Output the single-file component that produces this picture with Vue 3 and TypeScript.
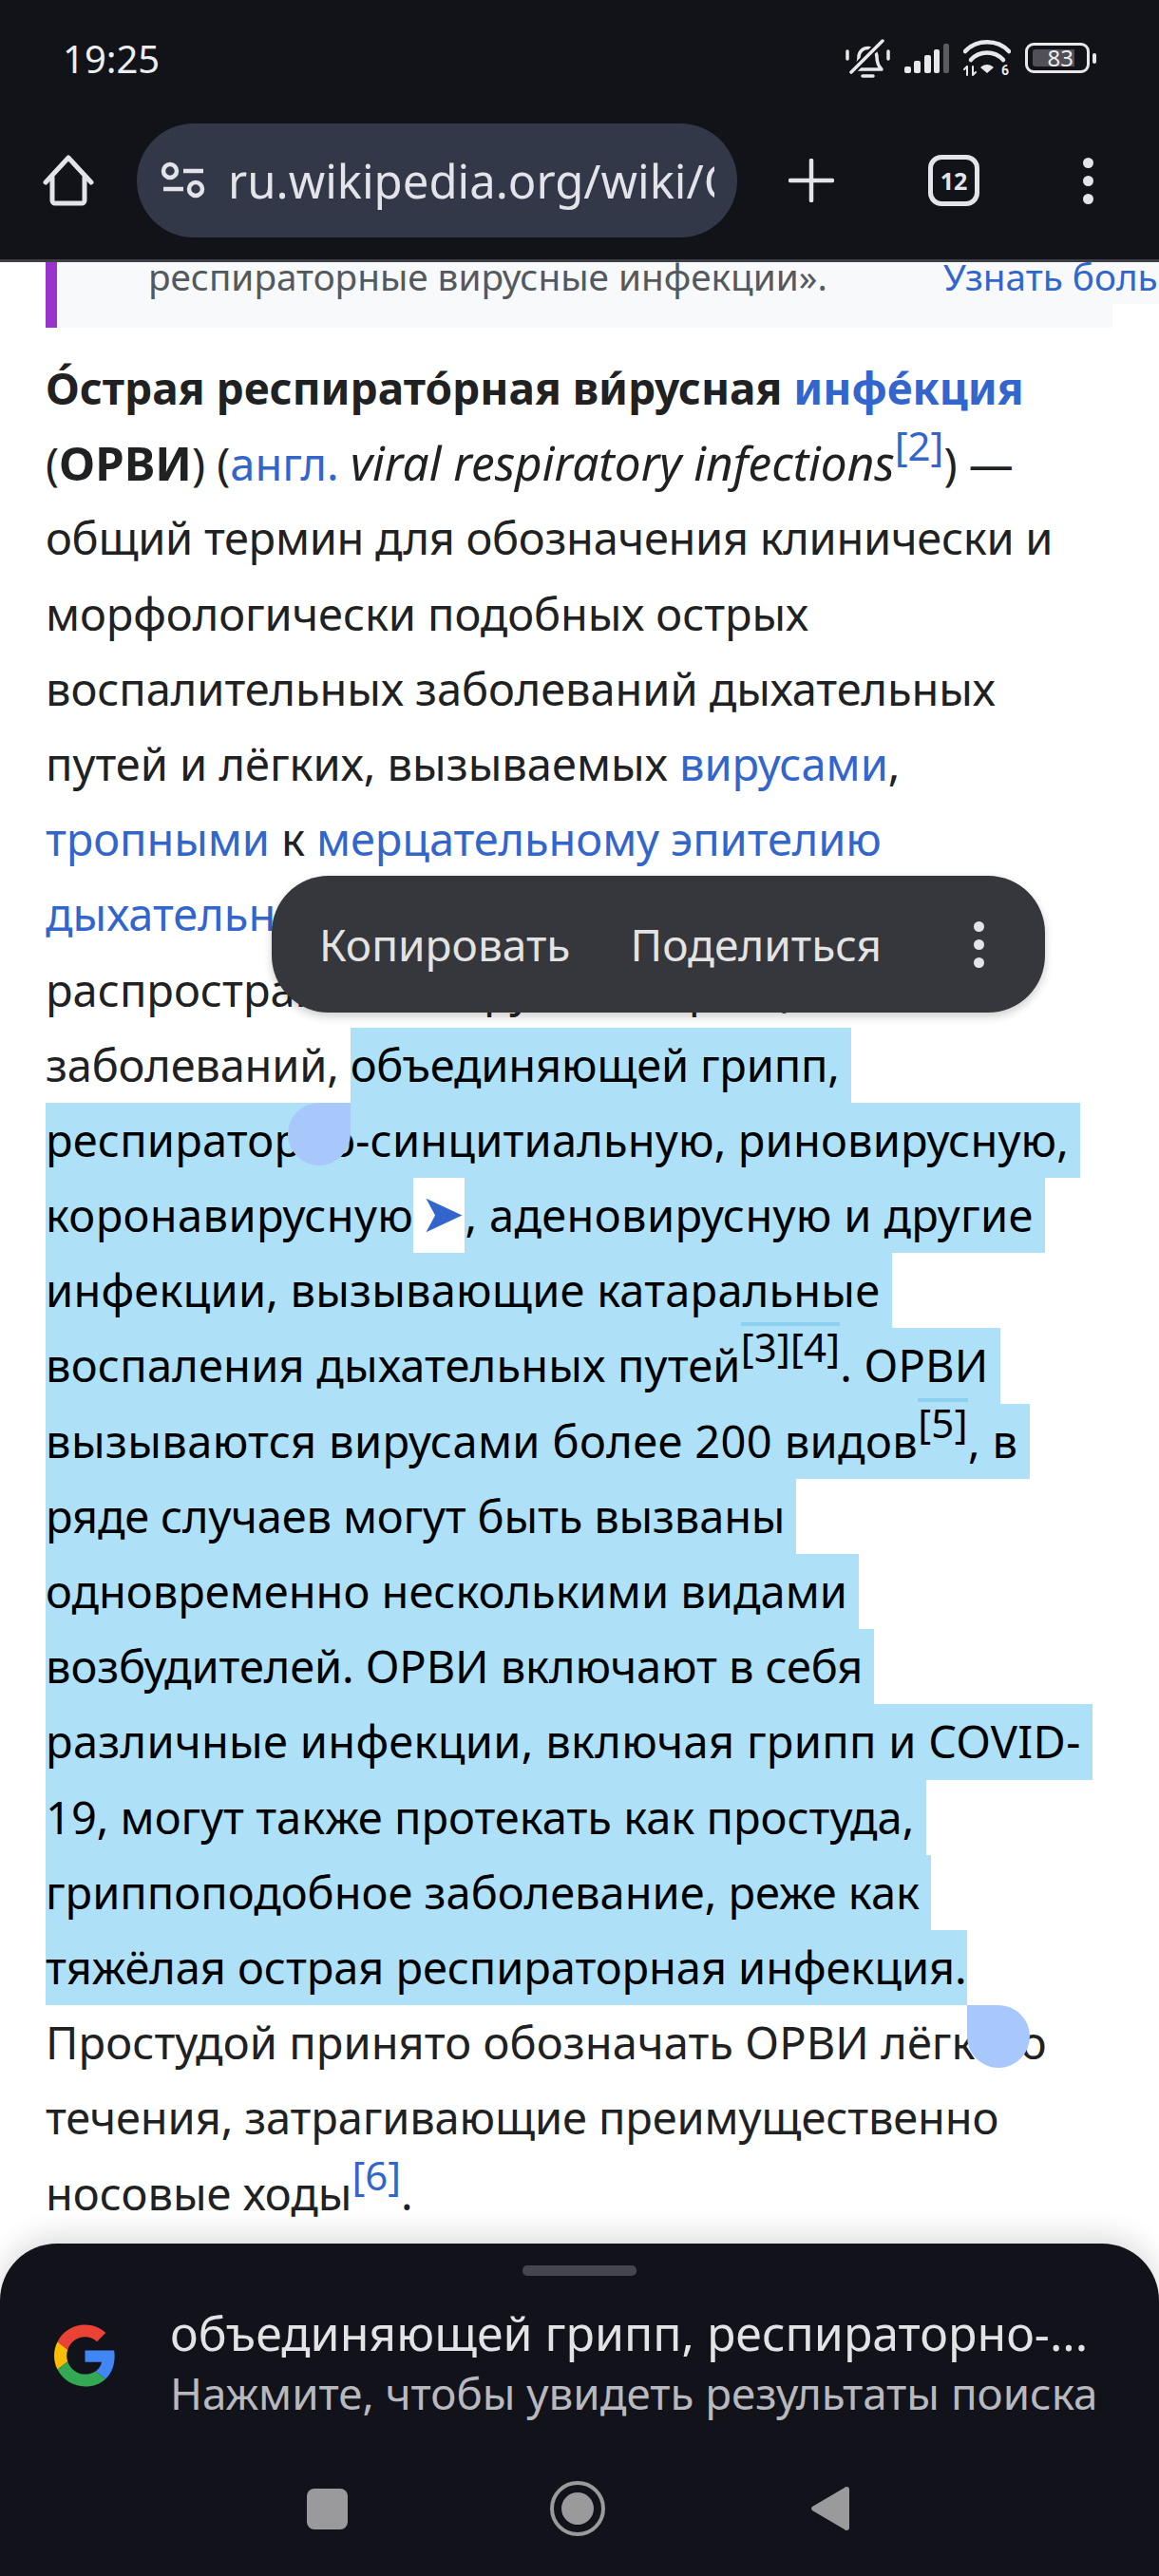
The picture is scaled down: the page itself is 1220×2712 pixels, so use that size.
<script setup lang="ts">
interface Seg {
  t: string
  c?: string
}
interface Line {
  segs: Seg[]
  sel?: boolean
  // letter-spacing fit for this line, px
  ls?: number
}

const lines: Line[] = [
  { segs: [{ t: 'О́страя респирато́рная ви́русная ', c: 'b' }, { t: 'инфе́кция', c: 'link b' }] },
  { segs: [{ t: '(' }, { t: 'ОРВИ', c: 'b caps' }, { t: ') (' }, { t: 'англ.', c: 'link' }, { t: ' ' }, { t: 'viral respiratory infections', c: 'i' }, { t: '[2]', c: 'ref' }, { t: ') —' }] },
  { ls: -0.3, segs: [{ t: 'общий термин для обозначения клинически и' }] },
  { ls: -0.1, segs: [{ t: 'морфологически подобных острых' }] },
  { ls: -0.08, segs: [{ t: 'воспалительных заболеваний дыхательных' }] },
  { segs: [{ t: 'путей и лёгких, вызываемых ' }, { t: 'вирусами', c: 'link' }, { t: ',' }] },
  { ls: -0.1, segs: [{ t: 'тропными', c: 'link' }, { t: ' к ' }, { t: 'мерцательному эпителию', c: 'link' }] },
  { segs: [{ t: 'дыхательных путей', c: 'link' }, { t: '. Самая' }] },
  { segs: [{ t: 'распространённая группа инфекций,' }] },
  { ls: -0.2, segs: [{ t: 'заболеваний, ' }, { t: 'объединяющей грипп, ', c: 'hl' }] },
  { sel: true, ls: 0.17, segs: [{ t: 'респираторно-синцитиальную, риновирусную, ' }] },
  { ls: 0.35, segs: [{ t: 'коронавирусную', c: 'hl' }, { t: '➤', c: 'arrow' }, { t: ', аденовирусную и другие ', c: 'hl' }] },
  { sel: true, ls: 0.2, segs: [{ t: 'инфекции, вызывающие катаральные ' }] },
  { sel: true, ls: 0.2, segs: [{ t: 'воспаления дыхательных путей' }, { t: '[3][4]', c: 'ref' }, { t: '. ОРВИ ' }] },
  { sel: true, ls: 0.37, segs: [{ t: 'вызываются вирусами более 200 видов' }, { t: '[5]', c: 'ref' }, { t: ', в ' }] },
  { sel: true, ls: -0.16, segs: [{ t: 'ряде случаев могут быть вызваны ' }] },
  { sel: true, segs: [{ t: 'одновременно несколькими видами ' }] },
  { sel: true, ls: -0.1, segs: [{ t: 'возбудителей. ОРВИ включают в себя ' }] },
  { sel: true, ls: 0.3, segs: [{ t: 'различные инфекции, включая грипп и COVID- ' }] },
  { sel: true, segs: [{ t: '19, могут также протекать как простуда, ' }] },
  { sel: true, segs: [{ t: 'гриппоподобное заболевание, реже как ' }] },
  { sel: true, ls: -0.08, segs: [{ t: 'тяжёлая острая респираторная инфекция.' }] },
  { ls: 0.08, segs: [{ t: 'Простудой принято обозначать ОРВИ лёгкого' }] },
  { ls: -0.13, segs: [{ t: 'течения, затрагивающие преимущественно' }] },
  { segs: [{ t: 'носовые ходы' }, { t: '[6]', c: 'ref' }, { t: '.' }] },
]
</script>

<template>
  <div class="page">
    <header class="chrome">
      <div class="status">
        <span class="time">19:25</span>
        <div class="status-icons">
          <svg width="47" height="41" viewBox="0 0 47 41" fill="none" stroke="#e8e8ea" stroke-linecap="round">
            <path d="M2 13v8M45 13v8" stroke-width="3.500" />
            <path d="M9 32c3-3 5-7 5-13a9.500 9.500 0 0 1 19 0c0 6 2 10 5 13z" stroke-width="3.500" stroke-linejoin="round" />
            <path d="M18 39h11" stroke-width="3.500" />
            <path d="M6 35 39 2" stroke="#121318" stroke-width="8" />
            <path d="M6 35 39 2" stroke-width="3.500" />
          </svg>
          <svg width="47" height="31" viewBox="0 0 47 31" fill="#e8e8ea">
            <rect x="0" y="24" width="7" height="7" rx="2" />
            <rect x="10" y="18" width="7" height="13" rx="2" />
            <rect x="21" y="12" width="7" height="19" rx="2" />
            <rect x="31" y="6" width="6" height="25" rx="2" />
            <rect x="41" y="0" width="6" height="31" rx="2" fill="#5b5c60" />
          </svg>
          <svg width="50" height="38" viewBox="0 0 50 38" fill="none" stroke="#e8e8ea" stroke-linecap="round">
            <path d="M2 12C14-1 36-1 48 12" stroke-width="4.500" />
            <path d="M8 21c9-10 25-10 34 0" stroke-width="4.500" />
            <path d="M18 29c4-4 10-4 14 0l-7 6z" fill="#e8e8ea" stroke="none" />
            <path d="M4 37V28M1 31l3-3M10 37V28M10 37l3-3" stroke-width="2" />
            <text x="40" y="37" class="wifi-six">6</text>
          </svg>
          <div class="battery">
            <div class="battery-body">
              <span class="battery-fill">83</span>
            </div>
            <span class="battery-tip"></span>
          </div>
        </div>
      </div>
      <div class="toolbar">
        <svg class="home" width="54" height="55" viewBox="0 0 54 55" fill="none" stroke="#e3e4ea" stroke-width="5" stroke-linecap="round" stroke-linejoin="round">
          <path d="M3 29 27 3l24 26" />
          <path d="M10 24v24a3 3 0 0 0 3 3h28a3 3 0 0 0 3-3V24" />
        </svg>
        <div class="url-pill">
          <svg width="47" height="40" viewBox="0 0 47 40" fill="none" stroke="#e3e4ea" stroke-width="4.500">
            <circle cx="10" cy="10" r="7" />
            <path d="M24 10h21M3 29h21" />
            <circle cx="37" cy="29" r="7" />
          </svg>
          <span class="url">ru.wikipedia.org/wiki/ОРВИ</span>
        </div>
        <svg class="plus" width="48" height="46" viewBox="0 0 48 46" fill="none" stroke="#e3e4ea" stroke-width="4.500" stroke-linecap="round">
          <path d="M24 2v42M2 23h44" />
        </svg>
        <div class="tabs">12</div>
        <div class="dots">
          <i></i><i></i><i></i>
        </div>
      </div>
    </header>

    <div class="notice">
      <span class="notice-text">респираторные вирусные инфекции».</span>
      <span class="notice-link">Узнать больше</span>
    </div>

    <article class="article">
      <div
        v-for="(line, i) in lines" :key="i"
        class="line"
        :class="{ sel: line.sel }"
        :style="line.ls ? { letterSpacing: line.ls + 'px' } : undefined"
      >
        <span v-for="(seg, j) in line.segs" :key="j" :class="seg.c">{{ seg.t }}</span>
      </div>
    </article>

    <div class="grip grip-start"></div>
    <div class="grip grip-end"></div>

    <div class="popup">
      <span>Копировать</span>
      <span>Поделиться</span>
      <div class="dots popup-dots">
        <i></i><i></i><i></i>
      </div>
    </div>

    <section class="sheet">
      <div class="sheet-handle"></div>
      <div class="sheet-row">
        <svg width="65" height="66" viewBox="0 0 48 48">
          <path fill="#EA4335" d="M24 9.500c3.540 0 6.710 1.220 9.210 3.600l6.850-6.850C35.900 2.380 30.470 0 24 0 14.620 0 6.510 5.380 2.560 13.220l7.980 6.190C12.430 13.720 17.740 9.500 24 9.500z" />
          <path fill="#4285F4" d="M46.980 24.550c0-1.570-.15-3.090-.38-4.550H24v9.020h12.940c-.58 2.960-2.260 5.480-4.780 7.180l7.730 6c4.510-4.180 7.090-10.360 7.090-17.650z" />
          <path fill="#FBBC05" d="M10.530 28.590c-.48-1.450-.76-2.990-.76-4.590s.27-3.140.76-4.590l-7.980-6.190C.92 16.460 0 20.120 0 24c0 3.880.92 7.540 2.560 10.780l7.970-6.190z" />
          <path fill="#34A853" d="M24 48c6.480 0 11.930-2.130 15.890-5.810l-7.730-6c-2.150 1.450-4.920 2.300-8.160 2.300-6.260 0-11.570-4.220-13.470-9.910l-7.980 6.190C6.510 42.620 14.620 48 24 48z" />
        </svg>
        <div class="sheet-text">
          <div class="sheet-title">объединяющей грипп, респираторно-...</div>
          <div class="sheet-sub">Нажмите, чтобы увидеть результаты поиска</div>
        </div>
      </div>
      <nav class="navbar">
        <span class="nav-square"></span>
        <span class="nav-home"></span>
        <svg width="40" height="48" viewBox="0 0 40 48" fill="#9a9a9c">
          <path d="M37 1a3 3 0 0 1 3 3v40a3 3 0 0 1-3 3 3 3 0 0 1-2-1L1 26a3 3 0 0 1 0-4L35 2a3 3 0 0 1 2-1z" />
        </svg>
      </nav>
    </section>
  </div>
</template>

<style scoped>
.page {
  position: relative;
  width: 1220px;
  height: 2712px;
  overflow: hidden;
  background: #fff;
  color: #202122;
  font-family: "Noto Sans", Roboto, sans-serif;
}
.chrome {
  height: 273px;
  background: #121318;
  border-bottom: 3px solid #3f4045;
  color: #e3e4ea;
}
.status {
  display: flex;
  justify-content: space-between;
  align-items: center;
  height: 122px;
  padding: 0 66px 2px;
}
.time {
  font-size: 40px;
  color: #eceded;
}
.status-icons {
  display: flex;
  align-items: center;
  gap: 15px;
}
.wifi-six {
  font: 700 14px Roboto, sans-serif;
  fill: #e8e8ea;
  stroke: none;
}
.battery {
  display: flex;
  align-items: center;
  gap: 3px;
}
.battery-body {
  width: 68px;
  height: 32px;
  box-sizing: border-box;
  border: 3px solid #e8e8ea;
  border-radius: 9px;
  padding: 4px 13px 4px 5px;
}
.battery-fill {
  display: block;
  height: 18px;
  line-height: 18px;
  background: #505056;
  border-radius: 3px 0 0 3px;
  color: #eee;
  font-size: 24px;
  text-align: right;
  padding-right: 1px;
}
.battery-tip {
  width: 4px;
  height: 11px;
  border-radius: 2px;
  background: #e8e8ea;
}
.toolbar {
  display: flex;
  align-items: center;
  height: 120px;
  margin-top: 6px;
  padding-left: 45px;
}
.url-pill {
  display: flex;
  align-items: center;
  gap: 24px;
  width: 632px;
  height: 120px;
  margin-left: 45px;
  box-sizing: border-box;
  padding: 0 24px 0 25px;
  border-radius: 60px;
  background: #333848;
}
.url-pill svg {
  flex-shrink: 0;
}
.url {
  overflow: hidden;
  white-space: nowrap;
  font-size: 49px;
}
.plus {
  margin-left: 54px;
}
.tabs {
  width: 54px;
  height: 54px;
  margin-left: 99px;
  box-sizing: border-box;
  border: 5px solid #e3e4ea;
  border-radius: 14px;
  display: flex;
  align-items: center;
  justify-content: center;
  font-size: 25px;
  font-weight: 700;
}
.dots {
  display: flex;
  flex-direction: column;
  gap: 8px;
  margin-left: 109px;
}
.dots i {
  width: 11px;
  height: 11px;
  border-radius: 50%;
  background: #e3e4ea;
}
.notice {
  position: relative;
  height: 69px;
  margin-left: 48px;
  border-left: 12px solid #9933cc;
  background: linear-gradient(#f8f9fa, #f8f9fa) 0 0 / 1111px 69px no-repeat, linear-gradient(#f8f9fa, #f8f9fa) 0 0 / 100% 44px no-repeat;
  display: flex;
  white-space: nowrap;
  font-size: 38.7px;
  line-height: 30px;
  padding-left: 96px;
}
.notice-text {
  color: #54595d;
}
.notice-link {
  color: #3366cc;
  margin-left: 122px;
}
.article {
  padding: 24px 0 0 48px;
  font-size: 47px;
  line-height: 79.2px;
}
.line {
  height: 79.2px;
  white-space: pre;
}
.line.sel {
  width: fit-content;
  background: #aee1f7;
  color: #000;
}
.hl {
  display: inline-block;
  height: 79.2px;
  background: #aee1f7;
  color: #000;
}
.b {
  font-weight: 700;
  font-size: 46px;
}
.caps {
  font-size: 49px;
}
.i {
  font-style: italic;
  font-size: 49.5px;
}
.link,
.ref {
  color: #3366cc;
}
.ref {
  position: relative;
  top: -21px;
  font-size: 42px;
  line-height: 0;
}
.sel .ref {
  color: #000;
}
.sel .ref::before {
  content: "";
  position: absolute;
  left: 0;
  right: 0;
  top: 3px;
  height: 4px;
  background: #8ccfee;
}
.arrow {
  padding-left: 7px;
  color: #3366cc;
  font-family: "DejaVu Sans", sans-serif;
  font-size: 56px;
  line-height: 0;
}
.grip {
  position: absolute;
  width: 66px;
  height: 66px;
  background: #a8c7fa;
}
.grip-start {
  left: 303px;
  top: 1161px;
  border-radius: 50% 0 50% 50%;
}
.grip-end {
  left: 1018px;
  top: 2111px;
  border-radius: 0 50% 50% 50%;
}
.popup {
  position: absolute;
  left: 286px;
  top: 922px;
  width: 814px;
  height: 144px;
  box-sizing: border-box;
  padding: 0 0 0 50px;
  display: flex;
  align-items: center;
  gap: 63px;
  border-radius: 60px;
  background: #36373c;
  box-shadow: 0 4px 10px rgba(0, 0, 0, 0.2);
  color: #e3e3e3;
  font-size: 46px;
}
.popup-dots {
  margin-left: 34px;
}
.sheet {
  position: absolute;
  left: 0;
  top: 2362px;
  width: 1220px;
  height: 350px;
  border-radius: 60px 60px 0 0;
  background: #12131a;
  box-shadow: 0 -8px 30px rgba(0, 0, 0, 0.14);
}
.sheet-handle {
  width: 120px;
  height: 11px;
  margin: 23px auto 0;
  border-radius: 5px;
  background: #44454d;
}
.sheet-row {
  display: flex;
  align-items: center;
  gap: 57px;
  margin-top: 28px;
  padding-left: 57px;
}
.sheet-row svg {
  margin-bottom: 14px;
}
.sheet-title {
  font-size: 50px;
  line-height: 64px;
  color: #e3e3e6;
  white-space: nowrap;
}
.sheet-sub {
  font-size: 45.7px;
  line-height: 62px;
  color: #b8b9be;
  white-space: nowrap;
}
.navbar {
  display: flex;
  align-items: center;
  margin-top: 62px;
  padding-left: 323px;
}
.nav-square {
  width: 43px;
  height: 43px;
  border-radius: 8px;
  background: #9a9a9c;
}
.nav-home {
  position: relative;
  width: 58px;
  height: 58px;
  margin: 0 217px 0 213px;
  box-sizing: border-box;
  border: 4px solid #9a9a9c;
  border-radius: 50%;
}
.nav-home::after {
  content: "";
  position: absolute;
  left: 8px;
  top: 8px;
  width: 34px;
  height: 34px;
  border-radius: 50%;
  background: #9a9a9c;
}
</style>
